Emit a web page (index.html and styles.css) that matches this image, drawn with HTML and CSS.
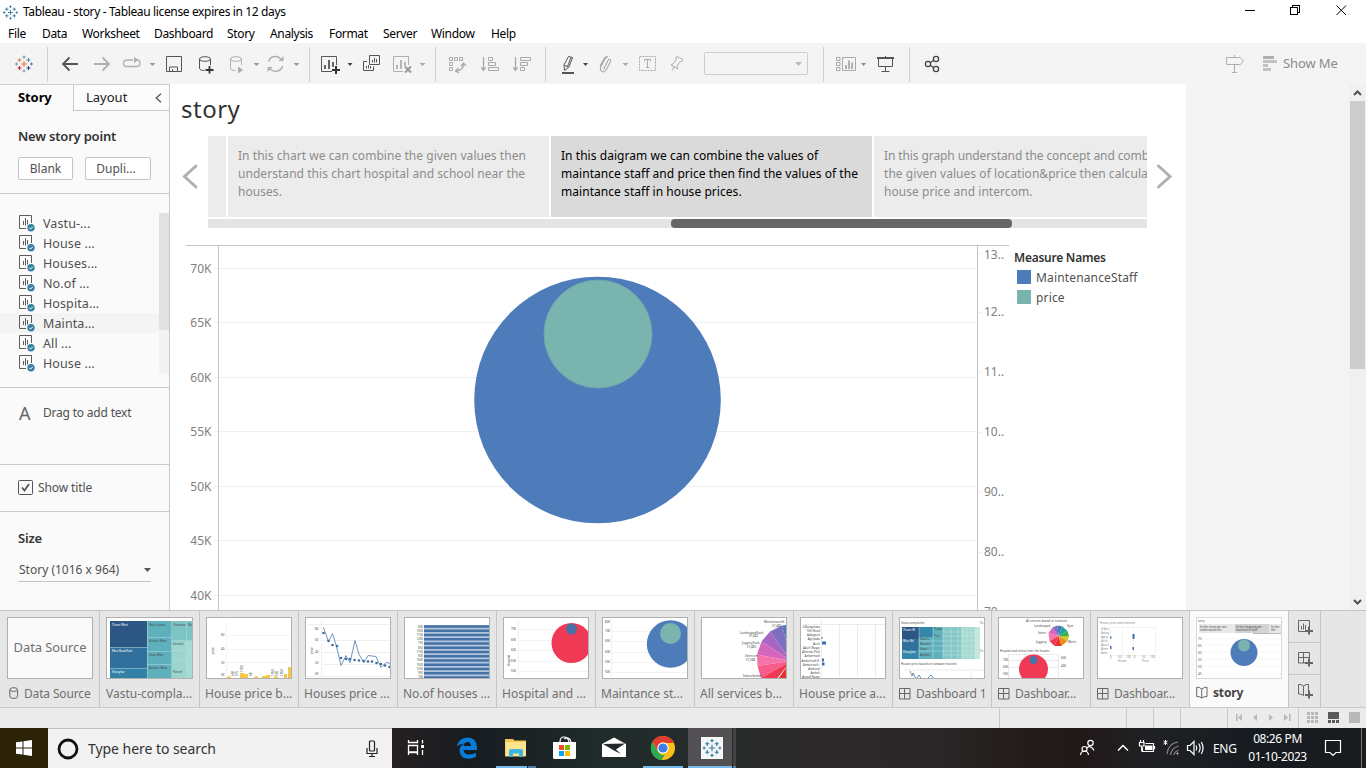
FILE: index.html
```html
<!DOCTYPE html>
<html lang="en">
<head>
<meta charset="utf-8">
<title>Tableau - story</title>
<link rel="stylesheet" href="styles.css">
</head>
<body>
<svg class="defs" width="0" height="0" aria-hidden="true">
  <defs>
    <symbol id="mark" viewBox="0 0 18 18">
      <path class="m1" d="M9 6v6M6 9h6"/>
      <path class="m2" d="M4.500 3v4M2.500 5h4"/>
      <path class="m3" d="M13.500 3v4M11.500 5h4"/>
      <path class="m4" d="M4.500 11v4M2.500 13h4"/>
      <path class="m5" d="M13.500 11v4M11.500 13h4"/>
      <path class="m6" d="M9 .5v3M7.500 2h3"/>
      <path class="m7" d="M9 14.500v3M7.500 16h3"/>
      <path class="m8" d="M1.500 7.500v3M0 9h3"/>
      <path class="m9" d="M16.500 7.500v3M15 9h3"/>
    </symbol>
    <symbol id="sheet" viewBox="0 0 17 17">
      <path d="M8 13.500H1.500v-13h12V8" fill="none" stroke="#5c5c5c"/>
      <path d="M5.500 6v4M7.500 3v7.500M9.500 5v4.500" stroke="#5c5c5c" fill="none"/>
      <circle cx="13" cy="12.800" r="3.700" fill="#34819f"/>
      <path d="M11.300 12.800l1.300 1.300 2.200-2.400" stroke="#fff" fill="none"/>
    </symbol>
    <symbol id="dash" viewBox="0 0 12 12">
      <path d="M.5.5h10.500v10.500H.5zM5.500.5V11M.5 5.500H11" fill="none" stroke="#666"/>
    </symbol>
    <symbol id="book" viewBox="0 0 12 13">
      <path d="M.7 1.200Q3 .8 5.700 3Q8.500.8 11 1.200V10.500Q8.500 10.200 5.700 12Q3 10.200 .7 10.500ZM5.700 3v9" fill="none" stroke="#666"/>
    </symbol>
  </defs>
</svg>

<header class="titlebar">
  <svg class="app-icon" viewBox="0 0 18 18"><use href="#mark"/></svg>
  <span class="window-title">Tableau - story - Tableau license expires in 12 days</span>
  <svg class="window-buttons" width="126" height="24" viewBox="1240 0 126 24" fill="none" stroke="#000" shape-rendering="crispEdges">
    <path d="M1245 10.500h10"/>
    <path d="M1290.500 7.500h7v7h-7zM1292.500 7v-1.500h7v7h-2"/>
    <path d="M1336.500 5.500l9.500 9.500M1346 5.500l-9.500 9.500" shape-rendering="auto"/>
  </svg>
</header>

<nav class="menu"><span>File</span><span>Data</span><span>Worksheet</span><span>Dashboard</span><span>Story</span><span>Analysis</span><span>Format</span><span>Server</span><span>Window</span><span>Help</span></nav>

<div class="toolbar">
  <div class="tool-group g-logo"><svg class="logo" width="18" height="18" viewBox="0 0 18 18"><use href="#mark"/></svg></div>
  <svg class="tool-group" width="262" height="35" viewBox="48 47 262 35" fill="none" stroke="#555">
    <path d="M78 64H63M69.500 57.500L63 64l6.500 6.500" stroke-width="1.800"/>
    <path d="M94 64h15M102.500 57.500L109 64l-6.500 6.500" stroke="#b0b0b0" stroke-width="1.800"/>
    <path d="M133 60h-6q-3.500 0-3.500 3.200t3.500 3.300h9.500q3.500 0 3.500-3.300t-3-3.200" stroke="#b0b0b0" stroke-width="1.300"/>
    <path d="M134 57v6l4.500-3z" fill="#b0b0b0" stroke="none"/>
    <path d="M149.500 63h6l-3 3z" fill="#999" stroke="none"/>
    <path d="M166.500 56.500h15v15h-15zM169.500 71.500v-4.500h8v4.500M172.500 71.500v-2.500"/>
    <ellipse cx="205" cy="59" rx="5.500" ry="2.300"/><path d="M199.500 59v9q0 2.500 5 2.500M210.500 59v6"/>
    <path d="M209.500 66v7.500M205.500 70h8" stroke="#333" stroke-width="1.800"/>
    <g stroke="#b0b0b0"><ellipse cx="236" cy="59" rx="5.500" ry="2.300"/><path d="M230.500 59v9q0 2.500 5 2.500M241.500 59v6"/><path d="M238 66.500v7l5-3.500z" fill="#aaa" stroke="none"/></g>
    <path d="M253.500 63h6l-3 3z" fill="#999" stroke="none"/>
    <g stroke="#b0b0b0" stroke-width="1.400"><path d="M268.500 61.500a7 7 0 0 1 13-1M282.500 66a7 7 0 0 1-13 1.500"/><path d="M283.500 56v5h-5zM267.500 72v-5h5z" fill="#b0b0b0" stroke="none"/></g>
    <path d="M293.500 63h6l-3 3z" fill="#999" stroke="none"/>
  </svg>
  <svg class="tool-group" width="126" height="35" viewBox="310 47 126 35" fill="none" stroke="#555">
    <path d="M332 71.500h-10.500v-15h15v8.500"/><path d="M325 65v4M329 60v9M333 62v5" stroke-width="1.800"/><path d="M336 66v8M332 70h8" stroke="#333" stroke-width="2"/>
    <path d="M347.500 63h5l-2.500 3z" fill="#444" stroke="none"/>
    <path d="M369.500 55.500h10v9h-10zM367 61.500h-3.500v9h10v-4M372.500 60v2.500M374.500 58v4.500M376.500 59v3.500M366.500 66v2.500M368.500 65v3.500M370.500 66v2.500"/>
    <g stroke="#b0b0b0"><path d="M403 71.500h-9.500v-15h15v8.500"/><path d="M397 65v4M401 60v9M405 62v4" stroke-width="1.800"/><path d="M405 66.500l6 6M411 66.500l-6 6" stroke-width="2" stroke="#999"/></g>
    <path d="M419.500 63h6l-3 3z" fill="#aaa" stroke="none"/>
  </svg>
  <svg class="tool-group" width="110" height="35" viewBox="436 47 110 35" fill="none" stroke="#aaa">
    <path d="M449.500 57.500h3v3h-3zM454.500 57.500h3v3h-3zM459.500 57.500h3v3h-3zM449.500 62.500h3v3h-3zM449.500 67.500h3v3h-3z"/>
    <path d="M463.500 64q0 6-7 7M461 66l2.500-3 2.500 3M458.500 68l-3 3 3.500 2" stroke-width="1.300"/>
    <path d="M483.500 57v13" stroke-width="1.300"/><path d="M480.500 67.500h6l-3 4z" fill="#aaa" stroke="none"/>
    <path d="M488.500 57.500h4v3h-4zM488.500 62.500h7v3h-7zM488.500 67.500h10v3h-10z"/>
    <path d="M515.500 57v13" stroke-width="1.300"/><path d="M512.500 67.500h6l-3 4z" fill="#aaa" stroke="none"/>
    <path d="M520.500 57.500h10v3h-10zM520.500 62.500h7v3h-7zM520.500 67.500h4v3h-4z"/>
  </svg>
  <svg class="tool-group" width="278" height="35" viewBox="546 47 278 35" fill="none" stroke="#555">
    <path d="M568.500 56.500l4 1-3.500 9.500-4.500 3.500-.5-5.500zM571 57.500l-3.500 9M564.500 65.500l4 1.500"/><path d="M562 73h12" stroke-width="2"/>
    <path d="M583 63h5l-2.500 3z" fill="#444" stroke="none"/>
    <path d="M603.500 69.500l4.500-9q1.200-2 2.400-.8.800.8-.2 2.500l-4 7.500q-2.500 3.500-4.700 1.500-2-2-.4-5l4-7.500q1-1.500 2-1.700M600 66l4.500-8q1.500-2 3.500-1" stroke="#aaa" stroke-width="1.100"/>
    <path d="M622.500 63h6l-3 3z" fill="#aaa" stroke="none"/>
    <path d="M639.500 56.500h16v14h-16z" stroke="#aaa" stroke-dasharray="2 1"/><path d="M644.500 61.500v-2h6v2M647.500 59.500v8M646 67.500h3.500" stroke="#aaa"/>
    <path d="M676.500 56.500l6.500 3-1.500 2-2 .5-2.500 4.500 1 2.500-7-4 2-1 3-4 .5-3.500zM674.500 66.500l-2.500 4" stroke="#aaa"/>
    <rect x="704.500" y="52.500" width="103" height="22" rx="1" stroke="#ccc"/><path d="M795 62h7l-3.500 4z" fill="#bbb" stroke="none"/>
  </svg>
  <svg class="tool-group" width="86" height="35" viewBox="824 47 86 35" fill="none" stroke="#aaa">
    <path d="M836.500 57.500h3.500v3h-3.500zM836.500 62.500h3.500v3h-3.500zM836.500 67.500h3.500v3h-3.500zM842.500 57.500h13v13h-13z"/><path d="M846 65v4M849 60.500V69M852 62.500V69" stroke-width="1.800"/>
    <path d="M861 63h5l-2.500 3z" fill="#888" stroke="none"/>
    <path d="M877 58h17" stroke="#555" stroke-width="2"/><path d="M885.500 56v2M878.500 58v8.500h14V58M885.500 66.500v5M881.500 71.500h8" stroke="#555"/>
  </svg>
  <svg class="share" width="40" height="35" viewBox="910 47 40 35" fill="none" stroke="#444" stroke-width="1.300">
    <circle cx="928" cy="64" r="2.600"/><circle cx="936" cy="59" r="2.600"/><circle cx="936" cy="69" r="2.600"/><path d="M930.500 62.500l3-2M930.500 65.500l3 2"/>
  </svg>
  <svg class="guide" width="64" height="35" viewBox="1219 47 64 35" fill="none" stroke="#b0b0b0">
    <path d="M1226.500 57.500h14l3 3.500-3 3.500h-14zM1234.500 55v2.500M1234.500 64.500v7.500M1232 72.500h5"/>
    <g stroke="none" fill="#b0b0b0"><path d="M1263 56h11v3h-11z"/><path d="M1263 60h14v3h-14zM1263 64h5v3h-5zM1263 68h8v3h-8z" fill="#c2c2c2"/></g>
  </svg>
  <span class="show-me">Show Me</span>
</div>

<main class="workspace">
  <aside class="side">
    <div class="side-tabs">
      <span class="tab-on">Story</span>
      <span class="tab-off">Layout<svg width="7" height="10" viewBox="0 0 7 10"><path d="M6 .7L1.200 5 6 9.300" fill="none" stroke="#555" stroke-width="1.300"/></svg></span>
    </div>
    <section class="new-point">
      <h2>New story point</h2>
      <div class="btns"><button>Blank</button><button class="dup">Dupli...</button></div>
    </section>
    <section class="sheets">
      <ul>
        <li><svg><use href="#sheet"/></svg>Vastu-...</li>
        <li><svg><use href="#sheet"/></svg>House ...</li>
        <li><svg><use href="#sheet"/></svg>Houses...</li>
        <li><svg><use href="#sheet"/></svg>No.of ...</li>
        <li><svg><use href="#sheet"/></svg>Hospita...</li>
        <li class="hover"><svg><use href="#sheet"/></svg>Mainta...</li>
        <li><svg><use href="#sheet"/></svg>All ...</li>
        <li><svg><use href="#sheet"/></svg>House ...</li>
      </ul>
      <div class="list-track"><div class="list-thumb"></div></div>
    </section>
    <section class="drag"><span class="letter">A</span><span>Drag to add text</span></section>
    <section class="show-title"><svg width="15" height="15" viewBox="0 0 15 15" fill="none" stroke="#555"><rect x=".5" y=".5" width="14" height="14" rx="1"/><path d="M4 7.500l2.500 3 4.500-6.500" stroke-width="1.800"/></svg><span>Show title</span></section>
    <section class="size">
      <h2>Size</h2>
      <div class="select"><span>Story (1016 x 964)</span><svg width="7" height="4" viewBox="0 0 7 4"><path d="M0 0h7L3.500 4z" fill="#555"/></svg></div>
    </section>
  </aside>

  <article class="story">
    <h1>story</h1>
    <div class="navigator">
      <svg class="nav-arrow" width="38" height="81" viewBox="170 136 38 81"><path d="M196 166l-11.500 10.500L196 187" fill="none" stroke="#b0b0b0" stroke-width="3" stroke-linecap="round"/></svg>
      <div class="strip">
        <div class="points">
          <div class="point stub"></div>
          <div class="point">In this chart we can combine the given values then<br>understand this chart hospital and school near the<br>houses.</div>
          <div class="point current">In this daigram we can combine the values of<br>maintance staff and price then find the values of the<br>maintance staff in house prices.</div>
          <div class="point"><span class="tight">In this graph understand the concept and comb</span><br>the given values of location&amp;price then calcula<br>house price and intercom.</div>
        </div>
        <div class="strip-track"><div class="strip-thumb"></div></div>
      </div>
      <svg class="nav-arrow" width="38" height="81" viewBox="1147 136 38 81"><path d="M1158.500 166l11.500 10.500-11.500 10.500" fill="none" stroke="#b0b0b0" stroke-width="3" stroke-linecap="round"/></svg>
    </div>
    <div class="viz">
      <svg class="chart" width="839" height="382" viewBox="170 228 839 382">
        <path class="grid" d="M214 268.500H977M214 322.500H977M214 377.500H977M214 431.500H977M214 486.500H977M214 540.500H977M214 595.500H977"/>
        <path class="grid" d="M978 253.500h4M978 312.500h4M978 372.500h4M978 432.500h4M978 492.500h4M978 552.500h4"/>
        <path class="axis" d="M186 245.500H1009M218.500 245v365M977.500 245v365"/>
        <circle cx="597.500" cy="400" r="123.300" fill="#4e7cbb"/>
        <circle cx="598" cy="334" r="54" fill="#79b5ae" stroke="#6aa6b0"/>
        <g class="ticks" text-anchor="end">
          <text x="211.500" y="273">70K</text><text x="211.500" y="327">65K</text><text x="211.500" y="382">60K</text><text x="211.500" y="436">55K</text><text x="211.500" y="491">50K</text><text x="211.500" y="545">45K</text><text x="211.500" y="600">40K</text>
        </g>
        <g class="ticks">
          <text x="984" y="259">13..</text><text x="984" y="316">12..</text><text x="984" y="376">11..</text><text x="984" y="436">10..</text><text x="984" y="496">90..</text><text x="984" y="556">80..</text><text x="984" y="616">70..</text>
        </g>
      </svg>
      <div class="legend">
        <h3>Measure Names</h3>
        <div class="key"><i class="blue"></i>MaintenanceStaff</div>
        <div class="key"><i class="teal"></i>price</div>
      </div>
    </div>
  </article>
  <div class="gutter"></div>
  <div class="vscroll">
    <svg width="17" height="17" viewBox="0 0 17 17"><path d="M5 11l3.500-3.500 3.500 3.500" fill="none" stroke="#505050" stroke-width="2"/></svg>
    <div class="vthumb"></div>
    <svg class="down" width="17" height="16" viewBox="0 0 17 16"><path d="M5 6l3.500 3.500L12 6" fill="none" stroke="#505050" stroke-width="2"/></svg>
  </div>
</main>

<div class="filmstrip">
  <div class="sheet-tab first"><div class="thumb source">Data Source</div><div class="label"><svg width="10" height="13" viewBox="0 0 10 13" fill="none" stroke="#666"><rect x=".8" y=".8" width="7.800" height="10.500" rx="2.500"/><path d="M1 3.500q3.700 2 7.400 0"/></svg><span>Data Source</span></div></div>

  <div class="sheet-tab second"><svg class="thumb wide" viewBox="106 617 87 62">
    <path fill="#2c5785" d="M110 621h37v26h-37z"/><path fill="#31709c" d="M110 647h37v21h-37z"/><path fill="#3180a6" d="M110 668h37v11h-37z"/>
    <path fill="#5fb0bd" d="M147 621h25v58h-25z"/><path fill="#7cc4c4" d="M172 621h21v20h-21z"/><path fill="#9bd5cd" d="M172 641h15v38h-15z"/><path fill="#a5dbd0" d="M187 641h6v38h-6z"/>
    <path d="M110 647.500h37M110 668.500h37M147.500 621v58M147 637.500h25M147 651.500h25M147 664.500h25M171.500 621v58M172 640.500h21M172 650.500h15M172 660.500h15M186.500 621v58M187 653.500h6M187 665.500h6" stroke="#b9dde0" stroke-width=".5"/>
    <g class="mini"><text x="112" y="625.500" fill="#fff">Thane West</text><text x="112" y="651.500" fill="#fff">Mira Road East</text><text x="112" y="672.500" fill="#fff">Kharghar</text><text x="149" y="625.500">Nala Sopara</text><text x="149" y="641.500">Borivali West</text><text x="149" y="655.500">Vasai West</text><text x="149" y="669">Andheri West</text><text x="173" y="625.500">Chembur</text><text x="173" y="645">Kandivli</text><text x="173" y="673">Panvel</text><text x="188" y="625.500">Ma</text></g>
  </svg><div class="label">Vastu-compla...</div></div>

  <div class="sheet-tab"><svg class="thumb" viewBox="206 617 86 62">
    <path d="M226.500 622v55M227 635.500h63M227 649.500h63M227 662.500h63" stroke="#f3f3f3"/>
    <path fill="#f4c842" d="M227 676.500h4v1.500h-4zM240 673h4v5h-4zM244 674h4v4h-4zM254 676.500h4v1.500h-4zM262 676h4v2h-4zM266 675h4v3h-4zM274 676.500h4v1.500h-4zM284 674h3v4h-3zM288 667h4v11h-4z"/>
    <g class="mini"><text x="221" y="636">60</text><text x="221" y="650">40</text><text x="221" y="664">20</text><text x="221" y="676">0K</text><text transform="translate(214 654)rotate(-90)">price</text><text transform="translate(234 676)rotate(-90)">600</text><text transform="translate(238 676)rotate(-90)">575</text><text transform="translate(243 672)rotate(-90)">1180</text><text transform="translate(252 676)rotate(-90)">68</text><text transform="translate(274 676)rotate(-90)">1050</text><text transform="translate(278 676)rotate(-90)">500</text><text transform="translate(283 676)rotate(-90)">1050</text></g>
  </svg><div class="label">House price b...</div></div>

  <div class="sheet-tab"><svg class="thumb" viewBox="305 617 86 62">
    <path d="M308 624.500h83M321.500 620v57M308 676.500h83M322 640.500h68M322 652.500h68M322 664.500h68" stroke="#e5e5e5" stroke-width=".6"/>
    <path fill="none" stroke="#6388b5" stroke-width=".9" d="M323.500 627.500l5 14 4-8 4 13 4.500 19 5-10 4 7 5-22 4 14 5 8 4-7 8 1 5 11 5-5 5 1"/>
    <g fill="#3f6d9c"><circle cx="323.500" cy="633" r="1.300"/><circle cx="328.500" cy="641" r="1.300"/><circle cx="332.500" cy="645" r="1.300"/><circle cx="337" cy="646" r="1.300"/><circle cx="341" cy="658" r="1.300"/><circle cx="346" cy="659" r="1.300"/><circle cx="350" cy="659" r="1.300"/><circle cx="354.500" cy="660" r="1.300"/><circle cx="359" cy="660.500" r="1.300"/><circle cx="363.500" cy="661" r="1.300"/><circle cx="368" cy="661.500" r="1.300"/><circle cx="372" cy="661.500" r="1.300"/><circle cx="376.500" cy="663" r="1.300"/><circle cx="381" cy="664" r="1.300"/><circle cx="385" cy="665.500" r="1.300"/><circle cx="389.500" cy="667" r="1.300"/></g>
    <g class="mini"><text x="315" y="630">80</text><text x="315" y="641">60</text><text x="315" y="653">40</text><text x="315" y="664">20</text><text x="315" y="675">0K</text><text transform="translate(313 654)rotate(-90)">price</text></g>
  </svg><div class="label">Houses price ...</div></div>

  <div class="sheet-tab"><svg class="thumb" viewBox="404 617 86 62">
    <path fill="#b4c7dc" d="M424 625h66v54h-66z"/>
    <path d="M424 626.500h66M424 630.700h66M424 635h66M424 639.200h66M424 643.400h66M424 647.700h66M424 652h66M424 656.200h66M424 660.400h66M424 664.700h66M424 669h66M424 673.200h66M424 677.400h66" stroke="#4472a6" stroke-width="2.500"/>
    <g class="mini" text-anchor="end"><text x="423" y="627.500">600</text><text x="423" y="631.700">1050</text><text x="423" y="636">1100</text><text x="423" y="640.200">1200</text><text x="423" y="644.400">750</text><text x="423" y="648.700">650</text><text x="423" y="653">1150</text><text x="423" y="657.200">900</text><text x="423" y="661.400">1000</text><text x="423" y="665.700">1500</text><text x="423" y="670">1250</text><text x="423" y="674.200">950</text><text x="423" y="678.400">700</text></g>
  </svg><div class="label">No.of houses ...</div></div>

  <div class="sheet-tab"><svg class="thumb" viewBox="503 617 86 62">
    <path d="M518.500 620v57M518 629.500h70M518 640.500h70M518 650.500h70M518 661.500h70M518 671.500h70" stroke="#f2f2f2"/>
    <circle cx="571.500" cy="643" r="20" fill="#f03a55"/><circle cx="571.500" cy="629" r="5.500" fill="#4a72a8"/>
    <g class="mini"><text x="511" y="630">70K</text><text x="511" y="641">65K</text><text x="511" y="651">60K</text><text x="511" y="662">55K</text><text x="511" y="672">50K</text><text transform="translate(510 666)rotate(-90)">Hospital</text></g>
  </svg><div class="label">Hospital and ...</div></div>

  <div class="sheet-tab"><svg class="thumb" viewBox="602 617 86 62">
    <path d="M611.500 620v57M611 631.500h76M611 641.500h76M611 652.500h76M611 662.500h76M611 672.500h76" stroke="#f2f2f2"/>
    <circle cx="670.500" cy="644" r="23.700" fill="#4e7cbb"/><circle cx="670.500" cy="633.500" r="10.500" fill="#79b5ae"/>
    <g class="mini"><text x="605" y="623">80K</text><text x="605" y="632">70K</text><text x="605" y="642">65K</text><text x="605" y="653">60K</text><text x="605" y="663">55K</text><text x="605" y="673">50K</text></g>
  </svg><div class="label">Maintance st...</div></div>

  <div class="sheet-tab"><svg class="thumb" viewBox="701 617 86 62">
    <g transform="translate(791 661)">
      <path fill="#4e7cbb" d="M0 0L-9-35.500 5-37z"/><path fill="#7a6fc0" d="M0 0L-21-29.500-9-35.500z"/><path fill="#a766c2" d="M0 0L-29.500-19.500-21-29.500z"/><path fill="#d565bd" d="M0 0L-34-6.500-29.500-19.500z"/><path fill="#f573ab" d="M0 0L-33.500 5-34-6.500z"/><path fill="#f85c8a" d="M0 0L-30 17-33.500 5z"/><path fill="#f03a55" d="M0 0L-20 25-30 17z"/><path fill="#e5322d" d="M0 0v28h-20z"/>
    </g>
    <g class="mini"><text x="764" y="623">MaintenanceSt</text><text x="772" y="626.500">57,480</text><text x="740" y="633.500">LandscapedGard.</text><text x="749" y="637">57,482</text><text x="742" y="644">JoggingTrack</text><text x="747" y="648">57,485</text><text x="745" y="657">Intercom</text><text x="746" y="660.500">57,288</text><text x="743" y="677">IndoorGames</text></g>
  </svg><div class="label">All services b...</div></div>

  <div class="sheet-tab"><svg class="thumb" viewBox="800 617 86 62">
    <path d="M803 624.500h83M821.500 620v58M839.500 624v53M857.500 624v53M875.500 624v53" stroke="#e4e4e4" stroke-width=".7"/>
    <path fill="#3a6fa8" d="M822 641.500h4v3h-4zM822 658.500h2v3h-2zM822 662.500h2.500v3H822zM821.500 637h1v2h-1z"/>
    <g class="mini" text-anchor="end"><text x="820" y="627.500">4 Bungalows</text><text x="820" y="632">10th Road</text><text x="820" y="636">Adaigaon</text><text x="820" y="640">Agripada</text><text x="820" y="644.500">Airoli</text><text x="820" y="648.500">Akurli Nagar</text><text x="820" y="653">Almeida Park</text><text x="820" y="657">Ambernath</text><text x="820" y="661.500">Ambernath E.</text><text x="820" y="665.500">Ambernath..</text><text x="820" y="670">Ambivali</text><text x="820" y="674">Amboli</text><text x="820" y="678">Anand Nagar</text></g>
  </svg><div class="label">House price a...</div></div>

  <div class="sheet-tab"><svg class="thumb" viewBox="899 617 86 62">
    <path fill="#2c5785" d="M902 627h17v12h-17z"/><path fill="#31709c" d="M902 639h17v11h-17z"/><path fill="#3587a9" d="M902 650h17v9h-17zM919 627h14v10h-14z"/><path fill="#5fb0bd" d="M919 637h14v22h-14zM933 627h10v32h-10z"/><path fill="#83c8c5" d="M943 627h18v32h-18z"/><path fill="#a5dacf" d="M961 627h14v32h-14z"/><path fill="#c4e8da" d="M975 627h5v32h-5z"/>
    <path d="M919 641h61M919 646h61M933 636h47M943 632h37M919 651h61M943 655h37M919 627v32M933 627v32M943 627v32M951 627v32M958 627v32M963 627v32M967 627v32M971 627v32M975 627v32" stroke="#d4ecec" stroke-width=".4" fill="none"/>
    <path fill="none" stroke="#4472a6" stroke-width=".8" d="M910 671l2 5 1-3 3 6 3-4 3 5M928 678l3-3 3 4"/><path d="M904 670h81M911 671v7M971 671v7" stroke="#ddd" stroke-width=".6"/>
    <g class="mini"><text x="901" y="624">Vastu-complaints</text><text x="980" y="624">To</text><text x="980" y="652">To</text><text x="901" y="665">Houses price based on rainwater harvest</text><text x="903" y="631" fill="#fff">Thane W.</text><text x="903" y="642" fill="#fff">Mira Rd</text><text x="903" y="653" fill="#fff">Kharghar</text><text x="920" y="640">Nala S.</text><text x="920" y="645">Borivali</text><text x="920" y="650">Vasai</text><text x="920" y="656">Andheri</text><text x="934" y="630">Powai</text><text x="934" y="637">Panv.</text></g>
  </svg><div class="label"><svg width="12" height="12"><use href="#dash"/></svg><span>Dashboard 1</span></div></div>

  <div class="sheet-tab"><svg class="thumb" viewBox="998 617 86 62">
    <g transform="translate(1058.500 636)"><path fill="#e5322d" d="M0 0L3 10-4 10z"/><path fill="#f28b1f" d="M0 0L9 5 3 10z"/><path fill="#c7c92f" d="M0 0L10.500 0 9 5z"/><path fill="#3daf52" d="M0 0L9-5 10.500 0z"/><path fill="#25a59a" d="M0 0L4-9.500 9-5z"/><path fill="#3c82c0" d="M0 0L-1-10.500 4-9.500z"/><path fill="#7a6fc0" d="M0 0L-6-8.500-1-10.500z"/><path fill="#d565bd" d="M0 0L-10-3-6-8.500z"/><path fill="#f573ab" d="M0 0L-9 5-10-3z"/><path fill="#f03a55" d="M0 0L-4 10-9 5z"/></g>
    <path d="M1008.500 654v24M1058.500 654v24M1008 654.500h50M1008 660.500h50M1008 667.500h50" stroke="#e8e8e8"/>
    <circle cx="1033.500" cy="669" r="14.500" fill="#f03a55"/><circle cx="1033.500" cy="660" r="4" fill="#4a72a8"/>
    <g class="mini"><text x="1026" y="622">All services based on locations</text><text x="1034" y="627">Landscaped</text><text x="1038" y="634">Interc.</text><text x="1036" y="643">Jogging</text><text x="1067" y="627">Gym</text><text x="1068" y="643">Maint.</text><text x="1000" y="652">Hospital and school near the houses</text><text x="1003" y="661">70K</text><text x="1003" y="668">60K</text><text x="1003" y="675">50K</text><text x="1061" y="659">60K</text><text x="1061" y="667">40K</text></g>
  </svg><div class="label"><svg width="12" height="12"><use href="#dash"/></svg><span>Dashboar...</span></div></div>

  <div class="sheet-tab"><svg class="thumb" viewBox="1097 617 86 62">
    <path d="M1110.500 627v33M1133.500 627v33M1155.500 627v33M1110 627.500h46M1122.500 627v33M1110 655.500h46" stroke="#ececec" stroke-width=".6" fill="none"/>
    <path fill="#3a6fa8" d="M1132.500 634h2v5h-2zM1110 636.500h1.500v2h-1.500zM1132.500 647h1.500v3h-1.500zM1110 646h1.500v3h-1.500z"/>
    <g class="mini light"><text x="1100" y="624">House price and intercom</text><text x="1101" y="630">4 Bun.</text><text x="1101" y="634">Adaig.</text><text x="1101" y="638">Agrip.</text><text x="1101" y="642">Airoli</text><text x="1101" y="646">Akurli</text><text x="1101" y="650">Alme.</text><text x="1101" y="654">Amb.</text><text x="1110" y="658">0</text><text x="1118" y="658">50</text><text x="1126" y="658">100</text><text x="1134" y="658">0</text><text x="1142" y="658">50</text><text x="1150" y="658">100</text><text x="1118" y="662">House</text><text x="1142" y="662">Price</text></g>
  </svg><div class="label"><svg width="12" height="12"><use href="#dash"/></svg><span>Dashboar...</span></div></div>

  <div class="sheet-tab active"><svg class="thumb" viewBox="1196 617 86 62">
    <path fill="#e8e8e8" d="M1199 624h83v9h-83z"/><path fill="#d2d2d2" d="M1235 624h34v9h-34z"/><path stroke="#bbb" d="M1253 633.500h29"/>
    <path d="M1202.500 636v42M1202 639h80M1202 645h80M1202 652h80M1202 659h80M1202 666h80M1202 674h80" stroke="#f2f2f2" stroke-width=".6"/>
    <circle cx="1244" cy="652.500" r="13.500" fill="#4e7cbb"/><circle cx="1244" cy="645.500" r="6" fill="#79b5ae"/>
    <g class="mini"><text x="1198" y="622">story</text><text x="1200" y="627.500">In this chart we can</text><text x="1200" y="631.200">understand this</text><text x="1236" y="627.500">In this daigram we</text><text x="1236" y="631.200">maintance staff</text><text x="1271" y="627.500">In this</text><text x="1271" y="631.200">the</text><text x="1198" y="640">70</text><text x="1198" y="647">65</text><text x="1198" y="654">60</text><text x="1198" y="661">55</text><text x="1198" y="668">50</text><text x="1198" y="675">45</text></g>
  </svg><div class="label"><svg width="12" height="13"><use href="#book"/></svg><span>story</span></div></div>

  <div class="new-tabs">
    <svg viewBox="1289 611 31 32" fill="none" stroke="#666"><path d="M1307 631.500h-8.500v-11h11v7M1301.500 626v3.500M1303.500 623.500v6M1305.500 625v4.500"/><path d="M1309 626.500v8M1305 631h8" stroke-width="2"/></svg>
    <svg viewBox="1289 643 31 32" fill="none" stroke="#666"><path d="M1307 663h-8.500v-10.500h11v6M1303.500 652.500V663M1298.500 657.500h11"/><path d="M1309 658.500v8M1305 663h8" stroke-width="2"/></svg>
    <svg viewBox="1289 675 31 32" fill="none" stroke="#666"><path d="M1303.500 686q-2.500-2-5-1.500v9.500q2.500-.5 5 1.500zM1303.500 686q2.500-2 5-1.500v6.500"/><path d="M1309 690.500v8M1305 695h8" stroke-width="2"/></svg>
  </div>
</div>

<div class="status">
  <svg width="367" height="20" viewBox="999 708 367 20">
    <path d="M999.500 708v20M1126.500 708v20M1153.500 708v20M1180.500 708v20M1227.500 708v20M1298.500 708v20" stroke="#cacaca"/>
    <g fill="#b8b8b8"><path d="M1236 714h1.500v7h-1.500zM1242 714v7l-4-3.500zM1257 714v7l-4-3.500zM1269 714v7l4-3.500zM1284 714v7l4-3.500zM1289 714h1.500v7h-1.500z"/>
    <path d="M1307 712h3v3h-3zM1311 712h3v3h-3zM1315 712h3v3h-3zM1307 716h3v3h-3zM1311 716h3v3h-3zM1315 716h3v3h-3zM1307 720h3v3h-3zM1311 720h3v3h-3zM1315 720h3v3h-3zM1349 712h11v11h-11z"/></g>
    <path fill="#5a5a5a" d="M1328 712h11v7h-11zM1328 720h3v3h-3zM1332 720h3v3h-3zM1336 720h3v3h-3z"/>
  </svg>
</div>

<footer class="taskbar">
  <div class="start"><svg width="16" height="16" viewBox="0 0 16 16" fill="#fff"><path d="M0 2.300l6.500-.9v6.100H0zM7.500 1.300L16 0v7.500H7.500zM0 8.500h6.500v6.100L0 13.700zM7.500 8.500H16V16l-8.500-1.300z"/></svg></div>
  <div class="search">
    <svg width="22" height="22" viewBox="0 0 22 22"><circle cx="11" cy="11" r="9" fill="none" stroke="#111" stroke-width="2.800"/></svg>
    <span>Type here to search</span>
    <svg class="mic" width="14" height="18" viewBox="0 0 14 18" fill="none" stroke="#222" stroke-width="1.200"><rect x="4.500" y="1" width="5" height="10" rx="1"/><path d="M2 8v5.500h10V8M7 13.500V16.500M4 16.500h6"/></svg>
  </div>
  <svg class="apps" width="344" height="40" viewBox="392 728 344 40">
    <g fill="none" stroke="#fff" stroke-width="1.300"><path d="M408.500 740v2.500h9V740M408.500 745.500h9v6.500h-9zM408.500 755v-2.500h9V755M422.500 740v3.500M422.500 750v5"/><path d="M421 745h3v3h-3z" fill="#fff" stroke="none"/></g>
    <path fill="#0a7bdb" d="M457 746.500q1.500-8.500 10.500-9 9.500.5 9.500 10v2.500h-13.500q.5 4.500 5.500 4.500 4 0 7-1.700v4q-3.500 2-7.500 2-8.500-.3-9-8.300.3-4.300 4.500-7-4.500.5-7 3zM463.500 746h7.500q-.2-4-3.500-4t-4 4z"/>
    <path fill="#f4c64f" d="M505 739h8l1.500 1.500h11.500v16h-21z"/><path fill="#fde58f" d="M505.500 742h20.500v14h-20.500z"/><path fill="#40b4e5" d="M509 757v-6q0-2 2-2h10q2 0 2 2v6h-4v-3.500h-6v3.500z"/>
    <path fill="#fff" d="M553 742h23v16q-.3 1-1.500 1h-20q-1.200 0-1.500-1z"/><path d="M560 742q0-5 4-5t5 5M564 739q6-3 7 3" fill="none" stroke="#fff" stroke-width="1.200"/><path fill="#f25022" d="M559 745h5v5h-5z"/><path fill="#7fba00" d="M565 745h5v5h-5z"/><path fill="#00a4ef" d="M559 751h5v5h-5z"/><path fill="#ffb900" d="M565 751h5v5h-5z"/>
    <path fill="#fff" d="M602 744l12-6.500 12 6.500v13h-24z"/><path fill="#22272a" d="M603 744l22-.5-9 6 5 4.500-7-3.500z"/>
    <circle cx="663" cy="748" r="12" fill="#fbc116"/><path fill="#e33b2e" d="M652.500 742a12 12 0 0 1 21.200 1H663l-5 8z"/><path fill="#2da94f" d="M652.500 742l5.500 9.500q2 3.500 5 3.500l2-.5-3.500 5.500a12 12 0 0 1-9-18z"/><circle cx="663" cy="748" r="5.700" fill="#fff"/><circle cx="663" cy="748" r="4.600" fill="#3f7ee8"/>
    <path fill="#535154" d="M688 728h44v40h-44z"/><path fill="#444244" d="M733 728h3v40h-3z"/>
    <path fill="#f4f6f7" d="M701 737h22v22h-22z"/><use href="#mark" x="702.500" y="738.500" width="19" height="19"/>
    <path fill="#76b9ed" d="M496 766h31v2h-31zM643 766h40v2h-40zM688 766h44v2h-44z"/><path fill="#4e7ea5" d="M528 766h8v2h-8zM733 766h3v2h-3z"/>
  </svg>
  <svg class="tray" width="133" height="40" viewBox="1076 728 133 40" fill="none" stroke="#fff" stroke-width="1.200">
    <circle cx="1090.500" cy="743" r="2.700"/><path d="M1087 748q3.500-3.500 7 2.500"/><circle cx="1084.500" cy="749" r="2.500"/><path d="M1080.500 755q.5-4 4-4t4 4"/>
    <path d="M1118 750.500l5-5 5 5" stroke-width="1.500"/>
    <path d="M1145.500 743.500h8v8h-11v-4M1154.500 746v3M1139.500 742.500h4.500v3.500h-4.500zM1140.500 742v-2M1143.500 742v-2M1141.700 746v5.500"/><path d="M1145 745.500h7.500v4.500h-7.500z" fill="#fff" stroke="none"/>
    <path d="M1165.500 740v5M1163.500 741l4 3M1167.500 741l-4 3" stroke-width="1"/><path d="M1167 754q1-10.500 11-12M1170.500 755q1-7 8-9M1174 755q.5-3.500 4.500-4.500" stroke="#8a8a8a"/><circle cx="1177.500" cy="753.500" r="1" fill="#ccc" stroke="none"/>
    <path d="M1187.500 745.500h2.500l4-4v13l-4-4h-2.500zM1196 745.500q1.500 2.500 0 5M1198.700 743.500q2.800 4.500 0 9M1201.300 742q3.500 6 0 12"/>
  </svg>
  <span class="lang">ENG</span>
  <div class="clock"><span>08:26 PM</span><span>01-10-2023</span></div>
  <svg class="notify" width="50" height="40" viewBox="1316 728 50 40"><path d="M1325.500 740.500h15v12h-4.500l-3 3-3-3h-4.500z" fill="none" stroke="#fff" stroke-width="1.200"/><path d="M1361.500 728v40" stroke="#777"/></svg>
</footer>
</body>
</html>
```
FILE: styles.css
```css
* { box-sizing: border-box; }
body { margin: 0; width: 1366px; height: 768px; overflow: hidden; background: #fff; color: #333; font-family: "Noto Sans", sans-serif; font-size: 12px; display: flex; flex-direction: column; }
h1, h2, h3, ul { margin: 0; padding: 0; font-weight: normal; }
svg { display: block; flex: none; }
.defs { position: absolute; }
span { white-space: nowrap; }

.m1, .m2, .m3, .m4, .m5, .m6, .m7, .m8, .m9 { stroke-width: 1.1; fill: none; }
.m1 { stroke: var(--centre, #3c7ba3); }
.m2 { stroke: var(--upper-left, #3c7ba3); }
.m3 { stroke: var(--upper-right, #3c7ba3); }
.m4 { stroke: var(--lower-left, #3c7ba3); }
.m5 { stroke: var(--lower-right, #3c7ba3); }
.m6 { stroke: var(--top, #3c7ba3); }
.m7 { stroke: var(--bottom, #3c7ba3); }
.m8 { stroke: var(--left, #3c7ba3); }
.m9 { stroke: var(--right, #3c7ba3); }
.logo { --centre: #e8762c; --upper-left: #d98a4f; --upper-right: #5b879b; --lower-left: #c72035; --lower-right: #1f447e; --top: #7199a6; --bottom: #8a93b8; --left: #7199a6; --right: #6c76a8; }

.titlebar { height: 24px; display: flex; align-items: center; }
.app-icon { width: 15px; height: 15px; margin: 0 5px 0 3px; }
.window-title { padding-bottom: 1px; font-size: 12px; color: #000; letter-spacing: -0.36px; }
.window-buttons { margin-left: auto; }

.menu { height: 19px; display: grid; grid-template-columns: 34px 40px 72px 73px 43px 59px 54px 48px 60px 40px; padding-left: 8px; line-height: 19px; color: #000; font-size: 12px; letter-spacing: -0.33px; }

.toolbar { height: 41px; padding-top: 2px; background: #f4f4f4; display: flex; align-items: center; }
.tool-group { box-shadow: inset -1px 0 #cfcfcf; height: 35px; flex: none; }
.g-logo { width: 48px; padding: 8px 0 0 15px; }
.guide { margin-left: auto; }
.show-me { width: 83px; padding-bottom: 3px; font-size: 13px; letter-spacing: -0.1px; color: #8a8a8a; }

.workspace { height: 526px; display: flex; }
.side { width: 170px; flex: none; background: #fafafa; border-right: 1px solid #c9c9c9; border-top: 1px solid #cfcfcf; }
.side-tabs { height: 26px; display: flex; line-height: 25px; font-size: 13px; color: #222; }
.tab-on { width: 73px; padding-left: 18px; font-weight: bold; letter-spacing: -0.1px; color: #000; }
.tab-off { flex: 1; display: flex; align-items: center; justify-content: space-between; padding: 0 7px 0 12px; border-left: 1px solid #c9c9c9; border-bottom: 1px solid #c9c9c9; background: #fcfcfc; }
.side h2 { font-size: 13px; font-weight: 600; letter-spacing: -0.2px; line-height: 18px; }
.new-point { height: 83px; padding: 16px 18px 0; border-bottom: 1px solid #c9c9c9; }
.btns { display: flex; gap: 12px; margin-top: 12px; }
.btns button { width: 55px; height: 23px; padding: 0; background: #fff; border: 1px solid #c4c4c4; border-radius: 2px; font: 12px "Noto Sans", sans-serif; color: #505050; }
.btns .dup { width: 66px; padding-right: 4px; }
.sheets { height: 194px; padding-top: 19px; display: flex; border-bottom: 1px solid #c9c9c9; }
.sheets ul { width: 159px; height: 161px; overflow: hidden; list-style: none; }
.sheets li { height: 20px; padding-left: 18px; display: flex; align-items: center; gap: 8px; font-size: 12.5px; color: #505050; letter-spacing: 0.1px; }
.sheets li svg { width: 17px; height: 17px; }
.sheets .hover { background: #f4f4f4; }
.list-track { width: 10px; height: 161px; background: #f3f3f3; }
.list-thumb { height: 117px; background: #e1e1e1; }
.drag { height: 77px; padding: 14px 0 0 19px; border-bottom: 1px solid #c9c9c9; display: flex; line-height: 22px; color: #505050; letter-spacing: -0.2px; }
.letter { width: 24px; font-size: 18px; color: #666; }
.show-title { height: 47px; display: flex; align-items: center; gap: 5px; padding: 0 0 1px 18px; border-bottom: 1px solid #c9c9c9; color: #505050; letter-spacing: -0.1px; }
.size { padding: 17px 18px 0; }
.select { height: 24px; margin-top: 11px; display: flex; align-items: center; justify-content: space-between; padding-left: 1px; border-bottom: 1px solid #c4c4c4; color: #505050; }

.story { width: 1016px; flex: none; overflow: hidden; }
.story h1 { height: 52px; padding: 9px 0 0 11px; font-size: 24px; letter-spacing: 0.5px; line-height: 32px; color: #333; }
.navigator { display: flex; }
.strip { width: 939px; overflow: hidden; }
.points { display: flex; gap: 2px; height: 81px; }
.point { width: 321px; flex: none; padding: 11px 10px; background: #ececec; color: #8c8c8c; line-height: 18px; white-space: nowrap; font-size: 12px; letter-spacing: 0.05px; }
.tight { letter-spacing: -0.1px; }
.stub { width: 18px; padding: 0; }
.current { background: #dadada; color: #000; }
.strip-track { margin-top: 2px; height: 9px; background: #e4e4e4; }
.strip-thumb { width: 341px; height: 9px; margin-left: 463px; border-radius: 4px; background: #666; }
.viz { display: flex; height: 382px; }
.grid { stroke: #f0f0f0; fill: none; }
.axis { stroke: #c4c4c4; fill: none; }
.ticks { font-size: 12px; fill: #808080; }
.legend { padding: 20px 0 0 5px; color: #505050; }
.legend h3 { font-size: 12px; line-height: 20px; margin-bottom: -1px; font-weight: 600; letter-spacing: -0.25px; color: #333; }
.key { height: 20px; display: flex; align-items: center; gap: 5px; padding-left: 3px; letter-spacing: 0.15px; }
.key i { width: 14px; height: 14px; }
.blue { background: #4e7cbb; }
.teal { background: #79b5ae; }
.gutter { flex: 1; background: #f4f4f4; }
.vscroll { width: 17px; background: #f0f0f0; display: flex; flex-direction: column; }
.vthumb { height: 268px; margin: 0 1px; background: #cdcdcd; }
.down { margin-top: auto; }

.filmstrip { height: 98px; display: flex; background: #e6e6e6; border-top: 1px solid #c4c4c4; border-bottom: 1px solid #cacaca; }
.sheet-tab { width: 99px; padding: 6px 0 0 6px; border-right: 1px solid #c6c6c6; flex: none; }
.first { width: 100px; padding-left: 7px; }
.second { width: 100px; }
.thumb { width: 86px; height: 62px; outline: 1px solid #b0b0b0; outline-offset: -1px; background: #fff; overflow: hidden; }
.wide { width: 87px; }
.source { background: #fafafa; color: #707070; font-size: 13px; line-height: 60px; text-align: center; white-space: nowrap; letter-spacing: -0.1px; }
.label { height: 27px; margin: 1px 0 0 -1px; display: flex; align-items: center; gap: 5px; color: #707070; font-size: 12px; white-space: nowrap; }
.second .label { margin-left: 0; }
.label span { letter-spacing: -0.15px; }
.first .label { padding-left: 3px; }
.label svg { margin-left: 1px; }
.first .label svg { margin-left: 0; }
.active { background: #fafafa; }
.active .thumb { outline-color: #d8d8d8; }
.active .label { font-weight: bold; color: #444; height: 25px; }
.mini { font-size: 2.9px; fill: #444; }
.light { fill: #888; }
.new-tabs { width: 32px; display: flex; flex-direction: column; border-right: 1px solid #c6c6c6; }
.new-tabs svg { width: 31px; height: 32px; box-shadow: inset 0 -1px #c6c6c6; }
.new-tabs svg:last-child { box-shadow: none; }

.status { height: 20px; background: #ebebeb; display: flex; justify-content: flex-end; }

.taskbar { height: 40px; display: flex; align-items: center; color: #fff; background: linear-gradient(90deg, #262022 0, #262022 392px, #171c20 470px, #202b2b 600px, #232c2b 660px, #2b2929 800px, #292727 940px, #231b1a 1030px, #211818 1080px, #202124 1150px, #161b20 1260px, #1a1c1f 1366px); }
.start { width: 48px; height: 40px; background: #2d2407; display: flex; align-items: center; justify-content: center; }
.search { width: 344px; height: 40px; background: #f2f2f2; border-top: 1px solid #bfbfbf; display: flex; align-items: center; padding: 0 13px 0 9px; color: #333; font-size: 14px; }
.search span { margin-left: 9px; letter-spacing: -0.05px; }
.mic { margin-left: auto; }
.tray { margin-left: auto; }
.lang { width: 35px; padding-left: 4px; letter-spacing: -0.3px; }
.clock { width: 72px; padding-right: 5px; text-align: center; display: flex; flex-direction: column; line-height: 18px; letter-spacing: -0.4px; }
```
